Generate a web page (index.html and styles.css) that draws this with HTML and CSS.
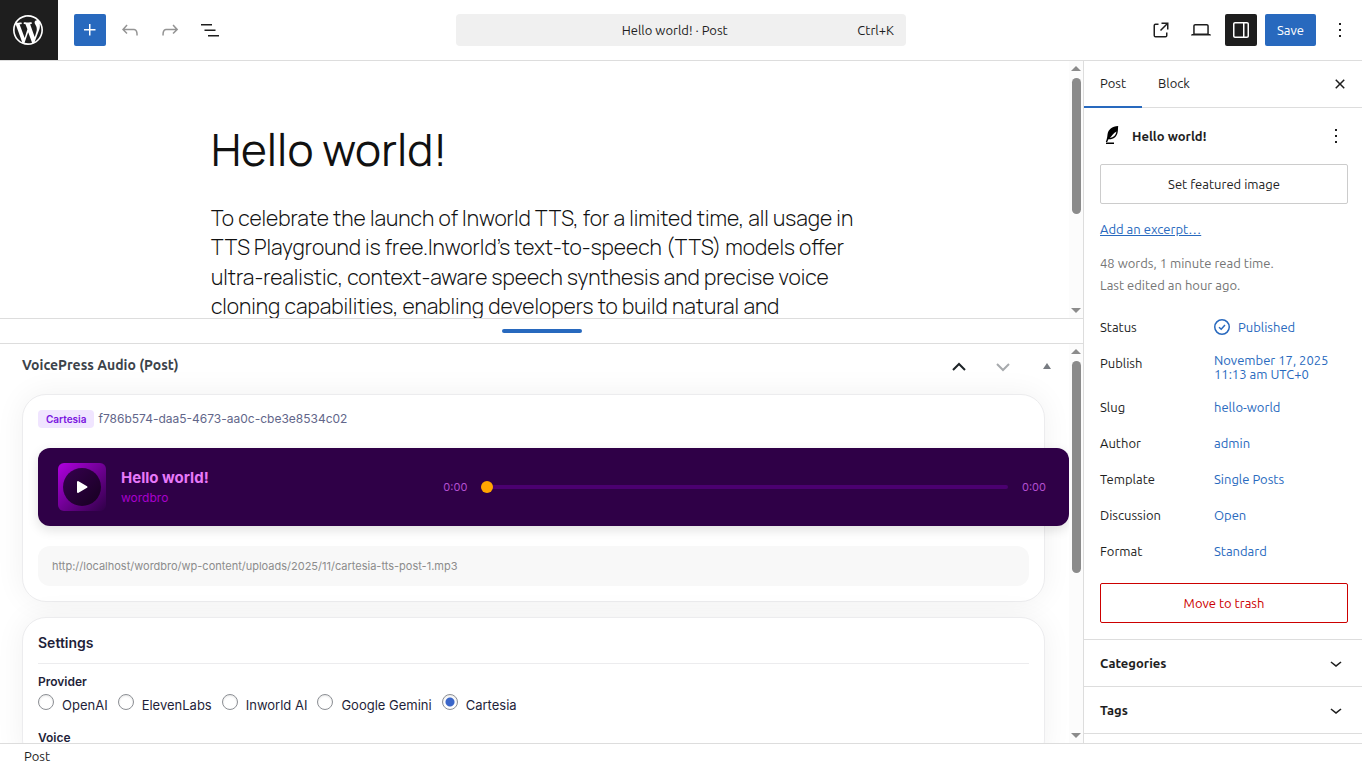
FILE: index.html
```html
<!DOCTYPE html>
<html lang="en">
<head>
    <meta charset="UTF-8">
    <meta name="viewport" content="width=device-width, initial-scale=1.0">
    <title>Edit Post "Hello world!"</title>
    <link rel="stylesheet" href="styles.css">
</head>
<body>
    <header class="topbar">
        <div class="topbar-left">
            <a class="wp-logo" href="#" aria-label="View Posts">
                <svg width="36" height="36" viewBox="-2 -2 24 24"><path d="M20 10c0-5.51-4.49-10-10-10C4.48 0 0 4.49 0 10c0 5.52 4.48 10 10 10 5.51 0 10-4.48 10-10zM7.78 15.37L4.37 6.22c.55-.02 1.17-.08 1.17-.08.5-.06.44-1.13-.06-1.11 0 0-1.45.11-2.37.11-.18 0-.37 0-.58-.01C4.12 2.69 6.87 1.11 10 1.11c2.33 0 4.45.87 6.05 2.34-.68-.11-1.65.39-1.65 1.58 0 .74.45 1.36.9 2.1.35.61.55 1.36.55 2.46 0 1.49-1.4 5-1.4 5l-3.03-8.37c.54-.02.82-.17.82-.17.5-.05.44-1.25-.06-1.22 0 0-1.44.12-2.38.12-.87 0-2.33-.12-2.33-.12-.5-.03-.56 1.2-.06 1.22l.92.08 1.26 3.41zM17.41 10c.24-.64.74-1.87.43-4.25.7 1.29 1.05 2.71 1.05 4.25 0 3.29-1.73 6.24-4.4 7.78.97-2.59 1.94-5.2 2.92-7.78zM6.1 18.09C3.12 16.65 1.11 13.53 1.11 10c0-1.3.23-2.48.72-3.59C3.25 10.3 4.67 14.2 6.1 18.09zm4.03-6.63l2.58 6.98c-.86.29-1.76.45-2.71.45-.79 0-1.57-.11-2.29-.33.81-2.38 1.62-4.74 2.42-7.1z"/></svg>
            </a>
            <div class="tools">
                <button class="icon-btn primary" aria-label="Block Inserter">
                    <svg viewBox="0 0 24 24"><path d="M11 12.5V17.5H12.5V12.5H17.5V11H12.5V6H11V11H6V12.5H11Z"/></svg>
                </button>
                <button class="icon-btn dim" aria-label="Undo">
                    <svg viewBox="0 0 24 24"><path d="M18.3 11.7c-.6-.6-1.4-.9-2.3-.9H6.7l2.9-3.3-1.1-1-4.5 5L8.5 16l1-1-2.7-2.7H16c.5 0 .9.2 1.3.5 1 1 1 3.4 1 4.5v.3h1.5v-.2c0-1.5 0-4.3-1.5-5.7z"/></svg>
                </button>
                <button class="icon-btn dim" aria-label="Redo">
                    <svg viewBox="0 0 24 24"><path d="M15.6 6.5l-1.1 1 2.9 3.3H8c-.9 0-1.7.3-2.3.9-1.4 1.5-1.4 4.2-1.4 5.6v.2h1.5v-.3c0-1.1 0-3.5 1-4.5.3-.3.7-.5 1.3-.5h9.2L14.5 15l1.1 1.1 4.6-4.6-4.6-5z"/></svg>
                </button>
                <button class="icon-btn" aria-label="Document Overview">
                    <svg viewBox="0 0 24 24"><path d="M3 6h11v1.5H3V6Zm3.5 5.5h11V13h-11v-1.5ZM21 17H10v1.5h11V17Z"/></svg>
                </button>
            </div>
        </div>

        <button class="command-bar">
            <span class="command-title">Hello world! · Post</span>
            <span>Ctrl+K</span>
        </button>

        <div class="topbar-right">
            <button class="icon-btn" aria-label="View Post">
                <svg viewBox="0 0 24 24"><path d="M19.5 4.5h-7V6h4.44l-5.97 5.97 1.06 1.06L18 7.06v4.44h1.5v-7Zm-13 1a2 2 0 0 0-2 2v10a2 2 0 0 0 2 2h10a2 2 0 0 0 2-2v-3H17v3a.5.5 0 0 1-.5.5h-10a.5.5 0 0 1-.5-.5v-10a.5.5 0 0 1 .5-.5h3V5.5h-3Z"/></svg>
            </button>
            <button class="icon-btn" aria-label="Preview">
                <svg viewBox="0 0 24 24"><path d="M20.5 16h-.7V8c0-1.1-.9-2-2-2H6.2c-1.1 0-2 .9-2 2v8h-.7c-.8 0-1.5.7-1.5 1.5h20c0-.8-.7-1.5-1.5-1.5zM5.7 8c0-.3.2-.5.5-.5h11.6c.3 0 .5.2.5.5v7.6H5.7V8z"/></svg>
            </button>
            <button class="icon-btn pressed" aria-label="Settings">
                <svg viewBox="0 0 24 24"><path d="M18 4H6c-1.1 0-2 .9-2 2v12c0 1.1.9 2 2 2h12c1.1 0 2-.9 2-2V6c0-1.1-.9-2-2-2zm-4 14.5H6c-.3 0-.5-.2-.5-.5V6c0-.3.2-.5.5-.5h8v13zm4.5-.5c0 .3-.2.5-.5.5h-2.5v-13H18c.3 0 .5.2.5.5v12z"/></svg>
            </button>
            <button class="save-btn">Save</button>
            <button class="icon-btn" aria-label="Options">
                <svg viewBox="0 0 24 24"><path d="M13 19h-2v-2h2v2zm0-6h-2v-2h2v2zm0-6h-2V5h2v2z"/></svg>
            </button>
        </div>
    </header>

    <div class="workspace">
        <main class="editor">
            <section class="pane canvas">
                <div class="pane-body">
                    <article class="post">
                        <h1>Hello world!</h1>
                        <p>To celebrate the launch of Inworld TTS, for a limited time, all usage in<br>
                        TTS Playground is free.Inworld’s text-to-speech (TTS) models offer<br>
                        ultra-realistic, context-aware speech synthesis and precise voice<br>
                        cloning capabilities, enabling developers to build natural and</p>
                    </article>
                </div>
                <div class="scrollbar" aria-hidden="true">
                    <i class="arrow up"></i>
                    <div class="track"><div class="thumb canvas-thumb"></div></div>
                    <i class="arrow down"></i>
                </div>
            </section>

            <div class="resizer"><span></span></div>

            <section class="pane metaboxes">
                <div class="pane-body">
                    <div class="metabox-head">
                        <h2>VoicePress Audio (Post)</h2>
                        <div class="metabox-actions">
                            <button aria-label="Move up">
                                <svg width="14" height="10" viewBox="0 0 14 10"><path d="M1 8l6-6 6 6"/></svg>
                            </button>
                            <button class="disabled" aria-label="Move down">
                                <svg width="14" height="10" viewBox="0 0 14 10"><path d="M1 2l6 6 6-6"/></svg>
                            </button>
                            <button class="toggle" aria-label="Toggle panel">
                                <svg width="8" height="8" viewBox="0 0 8 8"><path d="M4 0l4 6H0z"/></svg>
                            </button>
                        </div>
                    </div>

                    <div class="card">
                        <div class="voice">
                            <span class="badge">Cartesia</span>
                            <span class="voice-id">f786b574-daa5-4673-aa0c-cbe3e8534c02</span>
                        </div>
                        <div class="player">
                            <div class="cover">
                                <button class="play" aria-label="Play">
                                    <svg width="12" height="14" viewBox="0 0 12 14"><path d="M2 2v10l8.500-5z"/></svg>
                                </button>
                            </div>
                            <div class="track-info">
                                <div class="track-title">Hello world!</div>
                                <div class="track-artist">wordbro</div>
                            </div>
                            <div class="progress">
                                <span class="time">0:00</span>
                                <input type="range" min="0" max="100" value="0" aria-label="Seek">
                                <span class="time">0:00</span>
                            </div>
                        </div>
                        <input class="audio-url" type="text" readonly aria-label="Audio URL" value="http://localhost/wordbro/wp-content/uploads/2025/11/cartesia-tts-post-1.mp3">
                    </div>

                    <div class="card settings">
                        <h3>Settings</h3>
                        <div class="field-label" id="provider">Provider</div>
                        <div class="radios" role="radiogroup" aria-labelledby="provider">
                            <label><input type="radio" name="provider"><span>OpenAI</span></label>
                            <label><input type="radio" name="provider"><span>ElevenLabs</span></label>
                            <label><input type="radio" name="provider"><span>Inworld AI</span></label>
                            <label><input type="radio" name="provider"><span>Google Gemini</span></label>
                            <label><input type="radio" name="provider" checked><span>Cartesia</span></label>
                        </div>
                        <div class="field-label">Voice</div>
                    </div>
                </div>
                <div class="scrollbar" aria-hidden="true">
                    <i class="arrow up"></i>
                    <div class="track"><div class="thumb metabox-thumb"></div></div>
                    <i class="arrow down"></i>
                </div>
            </section>
        </main>

        <aside class="sidebar">
            <div class="tabs" role="tablist">
                <button class="tab active" role="tab" aria-selected="true">Post</button>
                <button class="tab" role="tab" aria-selected="false">Block</button>
                <button class="icon-btn close" aria-label="Close Settings">
                    <svg viewBox="0 0 24 24"><path d="M12 13.06l3.712 3.713 1.061-1.06L13.061 12l3.712-3.712-1.06-1.06L12 10.938 8.288 7.227l-1.061 1.06L10.939 12l-3.712 3.712 1.06 1.061L12 13.061z"/></svg>
                </button>
            </div>

            <div class="summary">
                <div class="post-card">
                    <svg class="quill" viewBox="0 0 24 24"><path fill-rule="evenodd" d="M18.200 2C12 2.200 8.200 5.500 7.500 10.500c-.2 1.800-.3 3.300-.8 4.800L5.800 18h1.400l1.200-2.700c4.800.4 8.300-2.300 9.200-6.800.5-2.300.3-4.500.6-6.500zM16.500 7.500c-.6 3.500-2.800 6-6.700 6.600C11.800 12.300 13 9.500 16.500 7.500z"/><path d="M6 18.500h8V20H6z"/></svg>
                    <strong>Hello world!</strong>
                    <button class="icon-btn" aria-label="Actions">
                        <svg viewBox="0 0 24 24"><path d="M13 19h-2v-2h2v2zm0-6h-2v-2h2v2zm0-6h-2V5h2v2z"/></svg>
                    </button>
                </div>
                <button class="wide-btn">Set featured image</button>
                <a class="excerpt" href="#">Add an excerpt…</a>
                <p class="stats">48 words, 1 minute read time.<br>Last edited an hour ago.</p>

                <dl class="rows">
                    <div class="row">
                        <dt>Status</dt>
                        <dd><a class="status" href="#"><svg width="18" height="18" viewBox="0 0 18 18"><circle cx="9" cy="9" r="7.250"/><path d="M6 9.200l2.200 2L12 7"/></svg>Published</a></dd>
                    </div>
                    <div class="row">
                        <dt>Publish</dt>
                        <dd class="date"><a href="#">November 17, 2025<br>11:13 am UTC+0</a></dd>
                    </div>
                    <div class="row"><dt>Slug</dt><dd><a href="#">hello-world</a></dd></div>
                    <div class="row"><dt>Author</dt><dd><a href="#">admin</a></dd></div>
                    <div class="row"><dt>Template</dt><dd><a href="#">Single Posts</a></dd></div>
                    <div class="row"><dt>Discussion</dt><dd><a href="#">Open</a></dd></div>
                    <div class="row"><dt>Format</dt><dd><a href="#">Standard</a></dd></div>
                </dl>

                <button class="wide-btn trash">Move to trash</button>
            </div>

            <button class="panel-toggle">Categories
                <svg viewBox="0 0 24 24"><path d="M17.5 11.6L12 16l-5.500-4.400.9-1.200L12 14l4.500-3.600 1 1.200z"/></svg>
            </button>
            <button class="panel-toggle">Tags
                <svg viewBox="0 0 24 24"><path d="M17.5 11.6L12 16l-5.500-4.400.9-1.200L12 14l4.500-3.600 1 1.200z"/></svg>
            </button>
        </aside>
    </div>

    <footer class="breadcrumb">Post</footer>
</body>
</html>
```
FILE: styles.css
```css
* {
    box-sizing: border-box;
}

body {
    margin: 0;
    height: 100vh;
    display: flex;
    flex-direction: column;
    overflow: hidden;
    background: #fff;
    color: #1e1e1e;
    font-family: Ubuntu, "Noto Sans", sans-serif;
    font-size: 13px;
    line-height: 20px;
}

button {
    font: inherit;
    color: inherit;
    background: none;
    border: 0;
    padding: 0;
    cursor: pointer;
}

a {
    color: #2869be;
    text-decoration: none;
}

h1, h2, h3, p, dl, dd {
    margin: 0;
}

svg {
    display: block;
    fill: currentColor;
    flex-shrink: 0;
}

/* Top bar */
.topbar {
    flex-shrink: 0;
    display: grid;
    grid-template-columns: 1fr minmax(0, 450px) 1fr;
    align-items: center;
    border-bottom: 1px solid #ddd;
}

.topbar-left,
.tools,
.topbar-right {
    display: flex;
    align-items: center;
}

.topbar-left {
    gap: 16px;
}

.tools,
.topbar-right {
    gap: 8px;
}

.topbar-right {
    justify-content: flex-end;
    padding-right: 6px;
}

.wp-logo {
    display: flex;
    align-items: center;
    justify-content: center;
    width: 58px;
    height: 60px;
    padding-right: 2px;
    background: #1e1e1e;
    color: #fff;
}

.icon-btn {
    display: flex;
    align-items: center;
    justify-content: center;
    width: 32px;
    height: 32px;
    border-radius: 2px;
}

.icon-btn svg {
    width: 24px;
    height: 24px;
}

.icon-btn.primary {
    background: #2869be;
    color: #fff;
}

.icon-btn.dim {
    color: #949494;
}

.icon-btn.pressed {
    background: #1e1e1e;
    color: #fff;
}

.command-bar {
    display: flex;
    align-items: center;
    height: 32px;
    padding: 0 12px;
    background: #f0f0f0;
    border-radius: 4px;
}

.command-title {
    flex: 1;
    padding-left: 24px;
}

.save-btn {
    height: 32px;
    padding: 0 12px;
    background: #2869be;
    color: #fff;
    border-radius: 2px;
}

/* Editor panes */
.workspace {
    flex: 1;
    min-height: 0;
    display: flex;
}

.editor {
    flex: 1;
    min-width: 0;
    display: flex;
    flex-direction: column;
}

.pane {
    min-height: 0;
    display: flex;
}

.pane-body {
    flex: 1;
    min-width: 0;
    overflow: hidden;
}

.canvas {
    flex: 9 1 0;
}

.metaboxes {
    flex: 14 1 0;
}

.post {
    max-width: 647px;
    margin: 0 auto;
    padding-top: 61px;
    color: #111;
    font-family: Manrope, Inter, sans-serif;
    font-weight: 300;
    white-space: nowrap;
}

.post h1 {
    font-size: 44px;
    font-weight: 400;
    line-height: 54px;
}

.post p {
    margin-top: 28px;
    font-size: 21px;
    line-height: 1.4;
}

.resizer {
    flex-shrink: 0;
    display: flex;
    justify-content: center;
    height: 26px;
    padding-top: 10px;
    border: solid #ddd;
    border-width: 1px 0;
}

.resizer span {
    width: 80px;
    height: 4px;
    border-radius: 2px;
    background: #2869be;
}

.scrollbar {
    flex-shrink: 0;
    display: flex;
    flex-direction: column;
    align-items: center;
    width: 14px;
    padding: 5px 0;
    background: #fcfcfc;
}

.track {
    flex: 1;
    width: 9px;
    padding: 7px 0;
}

.thumb {
    border-radius: 5px;
    background: #8b8b8b;
}

.canvas-thumb {
    height: 61%;
}

.metabox-thumb {
    height: 58%;
}

.arrow {
    border: 5px solid transparent;
}

.arrow.up {
    border-top: 0;
    border-bottom-color: #8b8b8b;
}

.arrow.down {
    border-bottom: 0;
    border-top-color: #8b8b8b;
}

/* Meta box */
.metaboxes .pane-body {
    padding: 0 24px 0 22px;
}

.metabox-head {
    display: flex;
    align-items: center;
    justify-content: space-between;
    height: 50px;
    padding-bottom: 8px;
}

.metabox-head h2 {
    color: #3c434a;
    font-size: 14px;
    font-weight: 700;
}

.metabox-actions {
    display: flex;
    align-items: center;
    padding-top: 4px;
}

.metabox-actions button {
    display: flex;
    justify-content: center;
    width: 44px;
}

.metabox-actions path {
    fill: none;
    stroke: #1d2327;
    stroke-width: 2;
}

.metabox-actions .disabled path {
    stroke: #a7aaad;
}

.metabox-actions .toggle path {
    fill: #787c82;
    stroke: none;
}

.metabox-actions .toggle {
    margin-right: -24px;
}

.card {
    margin-bottom: 15px;
    padding: 15px;
    border: 1px solid #ececee;
    border-radius: 24px;
    background: #fff;
    box-shadow: 0 0 30px rgba(0, 0, 0, 0.06);
    color: #1f1f3a;
    font-family: Inter, sans-serif;
}

.voice {
    display: flex;
    align-items: center;
    gap: 4px;
    margin-bottom: 20px;
}

.badge {
    padding: 0 8px;
    border-radius: 4px;
    background: #f0e5ff;
    color: #7a14e0;
    font-size: 10px;
    font-weight: 600;
    line-height: 18px;
}

.voice-id {
    color: #62668a;
    font-size: 12px;
    line-height: 18px;
}

/* The player bleeds over the right edge of its card */
.player {
    box-sizing: content-box;
    position: relative;
    width: 100%;
    display: flex;
    align-items: center;
    gap: 15px;
    padding: 15px 20px;
    border-radius: 12px;
    background: #2f0047;
    box-shadow: 0 4px 12px rgba(0, 0, 0, 0.12);
}

.cover {
    flex-shrink: 0;
    width: 48px;
    height: 48px;
    padding: 5px;
    border-radius: 6px;
    background: linear-gradient(135deg, #b000e0, #2f0047);
}

.play {
    display: flex;
    align-items: center;
    justify-content: center;
    width: 38px;
    height: 38px;
    border-radius: 50%;
    background: linear-gradient(135deg, #36004f, #16001f);
    color: #fff;
}

.play path {
    stroke: #fff;
    stroke-width: 2;
    stroke-linejoin: round;
}

.track-info {
    flex: 1 1 0;
    padding-top: 2px;
}

.track-title {
    color: #e879f9;
    font-size: 15px;
    font-weight: 700;
}

.track-artist {
    color: #a800cc;
    font-size: 12px;
}

.progress {
    flex: 2 1 0;
    display: flex;
    align-items: center;
    gap: 11px;
}

.time {
    width: 30px;
    color: #b44fd0;
    font-size: 11px;
    text-align: center;
}

.progress input {
    appearance: none;
    flex: 1;
    min-width: 0;
    height: 4px;
    margin: 0;
    border-radius: 2px;
    background: #4b0070;
}

.progress input::-webkit-slider-thumb {
    appearance: none;
    width: 12px;
    height: 12px;
    border-radius: 50%;
    background: #ffa500;
}

.audio-url {
    display: block;
    width: 100%;
    height: 40px;
    margin-top: 20px;
    padding: 0 14px;
    border: 0;
    border-radius: 12px;
    background: #f8f8f8;
    color: #8c8c8c;
    font-family: Inter, sans-serif;
    font-size: 11px;
}

.settings h3 {
    margin-bottom: 8px;
    padding-bottom: 10px;
    border-bottom: 1px solid #ececee;
    font-size: 14px;
    font-weight: 600;
}

.field-label {
    font-size: 12px;
    font-weight: 600;
}

.radios {
    display: flex;
    gap: 10px;
    height: 36px;
    padding-top: 2px;
}

.radios label {
    display: flex;
    gap: 8px;
    height: 16px;
}

.radios span {
    padding-top: 1px;
}

.radios input {
    appearance: none;
    width: 16px;
    height: 16px;
    margin: 0;
    border: 1px solid #8c8f94;
    border-radius: 50%;
    background: #fff;
    box-shadow: inset 0 1px 2px rgba(0, 0, 0, 0.1);
}

.radios input:checked {
    background: radial-gradient(circle, #3b66c9 4px, #fff 5px);
}

/* Settings sidebar */
.sidebar {
    flex-shrink: 0;
    width: 279px;
    overflow: hidden;
    border-left: 1px solid #ddd;
}

.tabs {
    display: flex;
    align-items: center;
    height: 47px;
    padding-right: 6px;
    border-bottom: 1px solid #ddd;
}

.tab {
    height: 47px;
    padding: 0 16px;
    border-bottom: 2px solid transparent;
}

.tab.active {
    border-bottom-color: #2869be;
}

.close {
    margin-left: auto;
}

.summary {
    padding: 12px 14px 16px 16px;
}

.post-card {
    display: flex;
    align-items: center;
    gap: 8px;
    height: 32px;
    margin-bottom: 12px;
}

.quill {
    width: 24px;
    height: 24px;
    fill: #000;
}

.post-card strong {
    flex: 1;
    font-weight: 600;
}

.post-card .icon-btn {
    width: 24px;
}

.wide-btn {
    display: block;
    width: 100%;
    height: 40px;
    border: 1px solid #ccc;
    border-radius: 2px;
}

.wide-btn.trash {
    margin-top: 16px;
    border-color: #c00;
    color: #c00;
}

.excerpt {
    display: inline-block;
    margin-top: 15px;
    text-decoration: underline;
}

.stats {
    margin: 13px 0 15px;
    color: #757575;
    line-height: 22px;
}

.rows {
    display: flex;
    flex-direction: column;
    gap: 4px;
}

.row {
    display: flex;
}

.row dt {
    width: 114px;
}

.row dt,
.row dd {
    line-height: 32px;
}

.row .date {
    padding: 6px 0;
    line-height: 14px;
}

.row .date a {
    display: block;
    height: 28px;
}

.status {
    display: flex;
    align-items: center;
    gap: 7px;
}

.status svg {
    fill: none;
    stroke: currentColor;
    stroke-width: 1.5;
    margin-left: -1px;
}

.panel-toggle {
    display: flex;
    align-items: center;
    justify-content: space-between;
    width: 100%;
    height: 47px;
    padding: 0 14px 0 16px;
    border-top: 1px solid #ddd;
    font-weight: 600;
}

.panel-toggle:last-child {
    height: 48px;
    border-bottom: 1px solid #ddd;
}

.panel-toggle svg {
    width: 24px;
    height: 24px;
}

.breadcrumb {
    flex-shrink: 0;
    height: 22px;
    padding: 2px 24px 0;
    border-top: 1px solid #ddd;
}
```
